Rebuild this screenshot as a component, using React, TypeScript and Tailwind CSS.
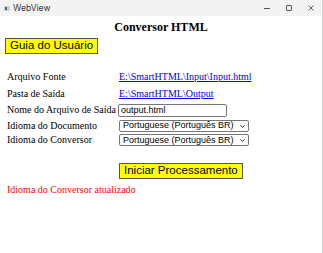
import { ChevronDown } from "lucide-react"

const serif = "font-['Liberation_Serif',serif]"
const sans = "font-['Liberation_Sans',Arial,sans-serif]"

function TitleBar() {
    return (
        <div className="flex items-center h-[16px] bg-[#f3f3f3] pl-[4px]">
            <svg width="6" height="5" viewBox="0 0 6 5" className="mr-[3px]">
                <rect x="0" y="0" width="6" height="5" fill="#c9d3d6" />
                <rect x="1" y="1" width="2" height="3" fill="#2f6f7e" />
            </svg>
            <span className="font-['Inter',sans-serif] text-[8.5px] text-[#333]">WebView</span>
            <div className="ml-auto flex items-center h-full">
                <div className="w-[22px] flex justify-center">
                    <div className="w-[6px] h-px bg-[#555]" />
                </div>
                <div className="w-[22px] flex justify-center">
                    <div className="w-[6px] h-[6px] border border-[#555] rounded-[1px]" />
                </div>
                <div className="w-[22px] flex justify-center">
                    <svg width="6" height="6" viewBox="0 0 6 6">
                        <path d="M0.5 0.5 L5.5 5.5 M5.5 0.5 L0.5 5.5" stroke="#555" strokeWidth="0.9" />
                    </svg>
                </div>
            </div>
        </div>
    )
}

function Row({ label, h, children }: { label: string; h: string; children: React.ReactNode }) {
    return (
        <div className={`flex items-center ${h}`}>
            <span className="w-[112px] shrink-0 text-[10px] leading-none">{label}</span>
            {children}
        </div>
    )
}

function LangSelect() {
    return (
        <div className={`relative w-[130px] h-[12px] border border-[#767676] rounded-[2px] bg-white flex items-center pl-[3px] ${sans} text-[9px] leading-none`}>
            Portuguese (Português BR)
            <ChevronDown className="absolute right-[2px] top-[2px] w-[7px] h-[7px]" strokeWidth={3} />
        </div>
    )
}

export default function App() {
    return (
        <div className="w-[323px] h-[253px] bg-white text-black border-r border-[#cfcfcf] overflow-hidden">
            <TitleBar />
            <div className={serif}>
                <h1 className="text-center text-[12px] font-bold leading-[14px] pt-[4px]">Conversor HTML</h1>

                <button className={`block ml-[5px] mt-[4px] h-[16px] px-[4px] bg-[#ffff00] border border-[#555] ${sans} text-[11.5px] leading-none`}>
                    Guia do Usuário
                </button>

                <div className="ml-[7px] mt-[14px]">
                    <Row label="Arquivo Fonte" h="h-[17px]">
                        <a href="#" className="text-[#0000ee] underline text-[10px] leading-none">E:\SmartHTML\Input\Input.html</a>
                    </Row>
                    <Row label="Pasta de Saída" h="h-[17px]">
                        <a href="#" className="text-[#0000ee] underline text-[10px] leading-none">E:\SmartHTML\Output</a>
                    </Row>
                    <Row label="Nome do Arquivo de Saída" h="h-[16px]">
                        <div className={`-ml-[1px] w-[109px] h-[13px] border border-[#767676] rounded-[2px] flex items-center pl-[2px] ${sans} text-[9px] leading-none`}>
                            output.html
                        </div>
                    </Row>
                    <Row label="Idioma do Documento" h="h-[15px]">
                        <LangSelect />
                    </Row>
                    <Row label="Idioma do Conversor" h="h-[14px]">
                        <LangSelect />
                    </Row>
                </div>

                <button className={`block ml-[119px] mt-[16px] h-[16px] px-[4px] bg-[#ffff00] border border-[#555] ${sans} text-[11.5px] leading-none`}>
                    Iniciar Processamento
                </button>

                <p className="ml-[7px] mt-[5px] text-[10px] leading-[12px] text-[#ff0000]">Idioma do Conversor atualizado</p>
            </div>
        </div>
    )
}
